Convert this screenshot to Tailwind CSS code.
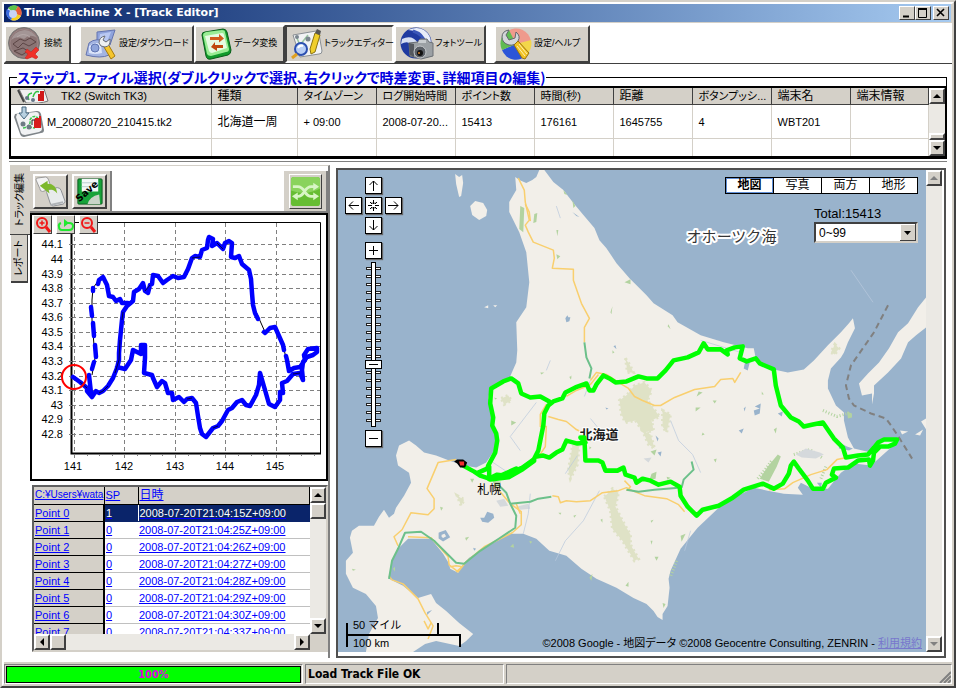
<!DOCTYPE html>
<html lang="ja">
<head>
  <meta charset="UTF-8" />
  <meta name="viewport" content="width=device-width, initial-scale=1.0" />
  <title>Time Machine X - [Track Editor]</title>
  <script src="https://cdn.jsdelivr.net/npm/@tailwindcss/browser@4"></script>
</head>
<body class="bg-[#d4d0c8] text-black font-['Liberation_Sans','Noto_Sans_CJK_JP',sans-serif]">

<div class="flex flex-col min-h-screen border-2 border-t-[#d4d0c8] border-l-[#d4d0c8] border-r-[#404040] border-b-[#404040]">
<div class="flex flex-col flex-1 border-2 border-t-white border-l-white border-r-[#d4d0c8] border-b-[#d4d0c8]">

  <!-- title bar -->
  <header class="flex items-center h-[18px] pl-[2px] pr-[2px] gap-[2px] mr-px bg-linear-to-r from-[#0a246a] to-[#a6caf0]">
    <svg class="w-4 h-4" viewBox="0 0 16 16">
      <circle cx="8" cy="8" r="7.5" fill="#dfe6f5"/>
      <path d="M8 8L2 3A8 8 0 0 1 12 1.500Z" fill="#5cc24a"/>
      <path d="M8 8L12 1A8 8 0 0 1 15 11Z" fill="#e8603c"/>
      <path d="M8 8L15 11A8 8 0 0 1 5 15Z" fill="#f5d020"/>
      <path d="M8 8L5 15A8 8 0 0 1 1 4Z" fill="#3a6ae0"/>
      <circle cx="7" cy="9" r="4" fill="#c8d4f6"/>
    </svg>
    <h1 class="flex-1 text-[11px] leading-4 font-bold text-white font-['DejaVu_Sans',sans-serif]">Time Machine X - [Track Editor]</h1>
    <div class="flex">
      <button aria-label="Minimize" class="w-4 h-[14px] bg-[#d4d0c8] border border-t-white border-l-white border-r-[#404040] border-b-[#404040]"><svg class="w-full h-full" viewBox="0 0 14 12"><path d="M3 9.500h6" stroke="#000" stroke-width="2"/></svg></button>
      <button aria-label="Maximize" class="w-4 h-[14px] bg-[#d4d0c8] border border-t-white border-l-white border-r-[#404040] border-b-[#404040]"><svg class="w-full h-full" viewBox="0 0 14 12"><path d="M2.500 2v8.500h8V2M2 2h9" fill="none" stroke="#000" stroke-width="1"/><path d="M2 2h9" stroke="#000" stroke-width="2"/></svg></button>
      <button aria-label="Close" class="w-4 h-[14px] ml-[2px] bg-[#d4d0c8] border border-t-white border-l-white border-r-[#404040] border-b-[#404040]"><svg class="w-full h-full" viewBox="0 0 14 12"><path d="M3 2l7 7M10 2l-7 7" stroke="#000" stroke-width="1.600"/></svg></button>
    </div>
  </header>

  <main class="flex flex-col flex-1 bg-white border-t border-[#d4d0c8]">

    <!-- main toolbar -->
    <nav class="flex h-[41px] pt-[2px] border-b border-[#404040] text-[9px] whitespace-nowrap [font-feature-settings:'palt']">
      <button class="flex items-center w-[67px] h-[38px] mr-2 pl-[2px] gap-[2px] bg-[#d4d0c8] border-2 border-t-white border-l-white border-r-[#404040] border-b-[#404040]">
        <svg class="w-[34px] h-[34px] shrink-0" viewBox="0 0 34 34">
          <circle cx="16" cy="16" r="15.500" fill="#8a7474" stroke="#777"/>
          <path d="M3 13A14 14 0 0 1 29 11Q22 6 16 12 9 8 3 13Z" fill="#a39595"/>
          <path d="M5 17l7-5 5 2 5-3 6 4-7 4-6-3-5 5zM6 24l9-3 5 3-6 4z" fill="none" stroke="#5c4646"/>
          <path d="M9 10q6-5 13 0" fill="none" stroke="#b5a8a8"/>
          <circle cx="16" cy="16" r="14" fill="none" stroke="#9c8686" stroke-width="1"/>
          <path d="M19 22l4 3 5-5 3 3-4 4 3 3-2 2-4-2-5 2-2-1 3-4-3-2z" fill="#f03028" stroke="#c02020" stroke-width="0.500"/>
        </svg>接続
      </button>
      <button class="flex items-center w-[115px] h-[38px] pl-1 gap-[2px] bg-[#d4d0c8] border-2 border-t-white border-l-white border-r-[#404040] border-b-[#404040]">
        <svg class="w-[32px] h-[32px] shrink-0" viewBox="0 0 32 32">
          <path d="M12 4l18-2-5 15-13-2z" fill="#8fa3dc" stroke="#6474b0"/>
          <path d="M15 6l11-2-4 10-8-1z" fill="#b9c8f2"/>
          <path d="M4 15q7-6 18-1l2 13q-8 4-23 0z" fill="#a3b4e2" stroke="#6474b0"/>
          <path d="M4 18q6-5 12-2l1 9q-7 2-13 0z" fill="#dbe4fa"/>
          <circle cx="10" cy="20" r="4" fill="#8fa4da" stroke="#5f74b2"/>
          <path d="M19 19l4-3 7 12-4 3z" fill="#f5c52c" stroke="#a47a10"/>
          <path d="M14 15q0-6 6-7l-2 4 3 2 4-3q1 7-5 8-5 0-6-4z" fill="#eef0f2" stroke="#6b6f78"/>
        </svg>設定/ダウンロード
      </button>
      <button class="flex items-center w-[91px] h-[38px] pl-1 gap-[2px] bg-[#d4d0c8] border-2 border-t-white border-l-white border-r-[#404040] border-b-[#404040]">
        <svg class="w-[32px] h-[32px] shrink-0" viewBox="0 0 32 32">
          <path d="M2 7q0-3 3-3l18-3q3 0 4 3l4 18q0 4-3 5L11 31q-4 1-5-3z" fill="#129a2c" stroke="#0a5c1a"/>
          <path d="M3 7q0-2 3-3l16-2q3 0 3 2l4 17q0 3-3 3l-15 4q-3 0-4-2z" fill="#9aec94"/>
          <path d="M5 8l17-3q2 0 2 2l3 13-15 5q-2 0-3-2z" fill="#e6fbe2"/>
          <path d="M10 9h9V6l5 4.500-5 4V12h-9z" fill="#d25c1c"/>
          <path d="M23 17h-8v-3l-4 5 6 4v-3h6z" fill="#c0480e"/>
        </svg>データ変換
      </button>
      <button class="flex items-center w-[109px] h-[38px] pl-1 gap-px bg-[#d4d0c8] border-2 border-t-[#404040] border-l-[#404040] border-r-white border-b-white">
        <svg class="w-[32px] h-[32px] shrink-0" viewBox="0 0 32 32">
          <path d="M2 7l23-4q2 0 3 3l3 17q0 3-3 3L9 29z" fill="#f2f3f4" stroke="#8a8f94"/>
          <path d="M5 8l4 9 8-10" fill="none" stroke="#9ac6a0" stroke-width="1.500"/>
          <circle cx="6" cy="9" r="2" fill="#7c8790"/><circle cx="17" cy="11" r="2.500" fill="#7c8790"/>
          <path d="M24 5l5 2-5 17-4 2-1-5z" fill="#f0cf2c" stroke="#8a7310"/>
          <path d="M24 5l2-4 4 2-1 4z" fill="#555"/>
          <circle cx="10" cy="21" r="6" fill="#b8cef5" stroke="#2b4fb0" stroke-width="2"/>
          <path d="M7 20a4 4 0 0 1 5-2" stroke="#fff" fill="none" stroke-width="2"/>
          <path d="M6 26l-5 4" stroke="#e0a020" stroke-width="3"/>
        </svg>トラックエディター
      </button>
      <button class="flex items-center w-[92px] h-[38px] mr-2 pl-1 gap-px bg-[#d4d0c8] border-2 border-t-white border-l-white border-r-[#404040] border-b-[#404040]">
        <svg class="w-[34px] h-[34px] shrink-0" viewBox="0 0 34 34">
          <circle cx="16" cy="16" r="15.500" fill="#1f3aa0"/>
          <path d="M8 3q12 0 17 12l6 1q0-8-7-13-7-4-16 0z" fill="#e8edf8"/>
          <path d="M2 12q10-5 16 4l-6 2Q8 13 1 17z" fill="#d5def2"/>
          <path d="M13 4q10 3 12 12" fill="none" stroke="#3a56b8" stroke-width="3"/>
          <path d="M9 16l9-1 2-3h7l2 3 4 1v13l-12 3-11-3z" fill="#9ba0a4" stroke="#6a6f74"/>
          <path d="M9 16l5 1v13l-4-2z" fill="#54585e"/>
          <path d="M19 13h7v3h-8z" fill="#c8cccf"/>
          <circle cx="20" cy="25" r="6" fill="#5a5f66" stroke="#c6c9cc"/>
          <circle cx="20" cy="26" r="3" fill="#111"/><circle cx="19" cy="26" r="1" fill="#d08030"/>
        </svg>フォトツール
      </button>
      <button class="flex items-center w-[96px] h-[38px] pl-1 gap-[2px] bg-[#d4d0c8] border-2 border-t-white border-l-white border-r-[#404040] border-b-[#404040]">
        <svg class="w-[32px] h-[32px] shrink-0" viewBox="0 0 32 32">
          <path d="M16 16L8 3A15 15 0 0 1 31 13Z" fill="#ef9a8c"/>
          <path d="M16 16L31 12A15 15 0 0 1 25 28Z" fill="#f3d64a"/>
          <path d="M16 16L27 27A15 15 0 0 1 2 22Z" fill="#2c55d8"/>
          <path d="M16 16L2 22A15 15 0 0 1 9 2Z" fill="#5fbb52"/>
          <path d="M2 9q0-6 7-7l-3 5 3 5 6-2 1-6q5 4 2 9-3 5-9 4-7-2-7-8z" fill="#d3d6d9" stroke="#63686e"/>
          <path d="M14 17l4-4 11 12-4 6-3-1z" fill="#f2c326" stroke="#9a7410"/>
          <path d="M17 18l8 10M19 16l8 10" stroke="#fff2b0"/>
        </svg>設定/ヘルプ
      </button>
    </nav>

    <!-- file list -->
    <fieldset class="mt-1 mx-[5px] border border-black min-w-0">
      <legend class="ml-[7px] text-[14px] leading-[18px] font-bold text-[#0000e0] font-['Noto_Sans_CJK_JP',sans-serif] whitespace-nowrap [font-feature-settings:'palt']">ステップ1. ファイル選択(ダブルクリックで選択、右クリックで時差変更、詳細項目の編集)</legend>
      <div class="flex h-[72px] border-t-2 border-l border-b-2 border-r border-black overflow-hidden">
        <table class="flex-1 table-fixed border-collapse w-full text-[11px] leading-4">
          <colgroup>
            <col class="w-[200px]" /><col class="w-[86px]" /><col class="w-[79px]" /><col class="w-[79px]" /><col class="w-[79px]" />
            <col class="w-[79px]" /><col class="w-[79px]" /><col class="w-[79px]" /><col class="w-[79px]" /><col />
          </colgroup>
          <thead>
            <tr class="h-4 bg-[#d4d0c8] text-left whitespace-nowrap *:font-normal *:border-r *:border-b *:border-[#404040] *:overflow-hidden *:[font-feature-settings:'palt']">
              <th class="pl-[6px]">
                <span class="flex items-center h-[14px] gap-3">
                  <svg class="w-8 h-[14px]" viewBox="0 0 32 14"><path d="M2 0h25l4 12q-8 3-22 2z" fill="#f0f0f0" stroke="#777"/><path d="M1 1l6 12" stroke="#444" stroke-width="2"/><path d="M12 11q-3-6 3-7M16 8q2-7 6-5" fill="none" stroke="#30c040" stroke-width="1.500"/><circle cx="10" cy="9" r="2" fill="#678"/><circle cx="16" cy="11" r="2" fill="#678"/><path d="M21 5h2V2h4v10h-6z" fill="#d01818"/></svg>
                  TK2 (Switch TK3)
                </span>
              </th>
              <th class="pl-[6px] text-[12px]">種類</th>
              <th class="pl-[6px]">タイムゾーン</th>
              <th class="pl-[6px]">ログ開始時間</th>
              <th class="pl-[6px]">ポイント数</th>
              <th class="pl-[6px]">時間(秒)</th>
              <th class="pl-[6px] text-[12px]">距離</th>
              <th class="pl-[6px]">ボタンプッシ...</th>
              <th class="pl-[6px] text-[12px]">端末名</th>
              <th class="pl-[6px] text-[12px]">端末情報</th>
            </tr>
          </thead>
          <tbody class="whitespace-nowrap *:*:border-r *:*:border-b *:*:border-[#d4d0c8]">
            <tr class="h-[34px]">
              <td class="pl-[2px]">
                <span class="flex items-center gap-[2px]">
                  <svg class="w-8 h-8 -my-px" viewBox="0 0 32 32"><path d="M2 8l22-3q3 0 4 3l3 16q0 3-3 3L11 31q-3 0-4-3L1 11z" fill="#7e8488"/><path d="M4 8l19-2q3 0 3 3l3 14q0 2-3 3l-14 3q-3 0-4-2L3 11z" fill="#f1f2f3"/><path d="M9 1h4v6h3l-5 6-5-6h3z" fill="#b8d0e0" stroke="#486880"/><path d="M10 22q8-1 7-8 3-6 8-2M16 21l6 1" fill="none" stroke="#3cc850" stroke-width="1.500" stroke-dasharray="3 1"/><circle cx="10" cy="18" r="2.500" fill="#6d7a84"/><circle cx="16" cy="21" r="2.500" fill="#6d7a84"/><path d="M22 12h4v-2h2v12h-7v-7z" fill="#d81c1c"/><path d="M22 14h-3v5" stroke="#222" fill="none"/></svg>
                  M_20080720_210415.tk2
                </span>
              </td>
              <td class="pl-[6px] text-[12px]">北海道一周</td>
              <td class="pl-[6px]">+ 09:00</td>
              <td class="pl-[6px]">2008-07-20...</td>
              <td class="pl-[6px]">15413</td>
              <td class="pl-[6px]">176161</td>
              <td class="pl-[6px]">1645755</td>
              <td class="pl-[6px]">4</td>
              <td class="pl-[6px]">WBT201</td>
              <td></td>
            </tr>
            <tr class="h-[18px]"><td></td><td></td><td></td><td></td><td></td><td></td><td></td><td></td><td></td><td></td></tr>
          </tbody>
        </table>
        <div class="flex flex-col w-4 bg-[#ebe9e4]">
          <button aria-label="Scroll up" class="h-4 bg-[#d4d0c8] border-2 border-t-white border-l-white border-r-[#404040] border-b-[#404040]"><svg class="w-full h-full" viewBox="0 0 12 12"><path d="M2 8l4-4 4 4z"/></svg></button>
          <div class="flex-1"></div>
          <div class="h-[7px] bg-[#d4d0c8] border-2 border-t-white border-l-white border-r-[#404040] border-b-[#404040]"></div>
          <button aria-label="Scroll down" class="h-4 bg-[#d4d0c8] border-2 border-t-white border-l-white border-r-[#404040] border-b-[#404040]"><svg class="w-full h-full" viewBox="0 0 12 12"><path d="M2 4l4 4 4-4z"/></svg></button>
        </div>
      </div>
    </fieldset>

    <div class="flex flex-1 mt-[2px] ml-[5px] mr-[5px] mb-1 border-t border-[#808080]">

      <!-- side tabs -->
      <div class="flex flex-col items-end w-[21px] pt-[3px] text-[10px] leading-4 whitespace-nowrap [font-feature-settings:'palt']">
        <button class="flex items-center justify-center w-5 h-[70px] bg-[#d4d0c8] border-b border-[#404040]"><span class="[writing-mode:vertical-rl] [text-orientation:sideways] rotate-180">トラック編集</span></button>
        <button class="flex items-center justify-center w-[17px] h-[48px] mr-[2px] bg-[#d4d0c8] border-b-2 border-r border-[#404040]"><span class="[writing-mode:vertical-rl] [text-orientation:sideways] rotate-180">レポート</span></button>
      </div>

      <!-- left column -->
      <div class="flex flex-col w-[300px] shrink-0 mt-[3px] border-t border-r-2 border-[#808080] border-t-[#d4d0c8]">
        <div class="flex justify-between h-[47px] pt-[5px] bg-white border-b-2 border-[#808080]">
          <div class="flex h-[40px] p-[3px] gap-1 bg-[#d4d0c8] border-r-2 border-[#808080]">
            <button aria-label="Merge tracks" class="w-[35px] h-[35px] bg-[#d4d0c8] border-2 border-t-white border-l-white border-r-[#404040] border-b-[#404040]"><svg class="w-full h-full" viewBox="0 0 32 32"><path d="M1 4q0-2 2-2l8-1q2 0 3 3l3 9-9 3q-3 0-3-3z" fill="#f3f3f3" stroke="#999"/><path d="M12 17q0-2 2-3l9-2q3 0 4 3l4 11q0 2-2 3l-10 2q-2 0-3-2z" fill="#e8ebec" stroke="#8c9094"/><path d="M16 30l13-3" stroke="#b0b4b8" stroke-width="2"/><path d="M5 10l8-5v3q9 0 10 10-4-5-9-4l1 4z" fill="#7db82c"/></svg></button>
            <button aria-label="Save" class="w-[35px] h-[35px] bg-[#d4d0c8] border-2 border-t-white border-l-white border-r-[#404040] border-b-[#404040]"><svg class="w-full h-full" viewBox="0 0 32 32"><rect x="4" y="3" width="25" height="26" rx="1" fill="#17a33a" stroke="#0b5c20"/><path d="M8 3h17v13H8z" fill="#f3f8f8"/><path d="M8 7h17M8 11h17" stroke="#b8cccc"/><path d="M14 29q2-8 12-10l1 10z" fill="#c9d3c8"/><text x="5" y="26" transform="rotate(-42 7 26)" font-size="10" font-weight="bold" font-family="DejaVu Sans">Save</text></svg></button>
          </div>
          <div class="flex h-[40px] w-[44px] p-[3px] justify-center bg-[#d4d0c8] border-r-2 border-[#808080]">
            <button aria-label="Shuffle" class="w-[33px] h-[35px] bg-[#d4d0c8] border border-t-white border-l-white border-r-[#404040] border-b-[#404040]"><svg class="w-full h-full" viewBox="0 0 32 32"><rect x="1" y="1" width="30" height="30" rx="3" fill="#66bd32"/><path d="M1 4q0-3 3-3h24q3 0 3 3v9q-15 8-30 2z" fill="#8ad35c"/><path d="M3 11h5q4 0 7 5t7 5h3M7 21h1q4 0 7-5t7-5h6" fill="none" stroke="#d8f5c4" stroke-width="3"/><path d="M24 7l6 4-6 4zM24 17l6 4-6 4zM8 17l-6 4 6 4z" fill="#d8f5c4"/></svg></button>
          </div>
        </div>

        <!-- longitude / latitude chart -->
        <div class="relative border-2 border-black bg-white">
          <svg class="block w-full" viewBox="32 215 294 264" font-family="Liberation Sans">
            <g stroke="#808080" stroke-dasharray="4 3" shape-rendering="crispEdges">
              <path d="M72 244.500H320M72 259.500H320M72 274.500H320M72 288.500H320M72 303.500H320M72 317.500H320M72 332.500H320M72 346.500H320M72 361.500H320M72 376.500H320M72 390.500H320M72 405.500H320M72 419.500H320M72 434.500H320"/>
              <path d="M74.500 223V453M124.500 223V453M175.500 223V453M225.500 223V453M276.500 223V453"/>
            </g>
            <path d="M71.500 222.500H320.500V453" fill="none" stroke="#000"/>
            <path d="M71.500 222V453.500H321" fill="none" stroke="#000" stroke-width="2"/>
            <path d="M69 244.500h3M69 259.500h3M69 274.500h3M69 288.500h3M69 303.500h3M69 317.500h3M69 332.500h3M69 346.500h3M69 361.500h3M69 376.500h3M69 390.500h3M69 405.500h3M69 419.500h3M69 434.500h3M74.500 454v4M87.500 454v2M99.500 454v2M112.500 454v2M124.500 454v4M137.500 454v2M150.500 454v2M162.500 454v2M175.500 454v4M188.500 454v2M200.500 454v2M213.500 454v2M225.500 454v4M238.500 454v2M251.500 454v2M263.500 454v2M276.500 454v4M289.500 454v2M301.500 454v2M314.500 454v2" stroke="#808080"/>
            <g id="latLabels" font-size="11" text-anchor="end"></g>
            <g id="lonLabels" font-size="11" text-anchor="middle"></g>
            <path d="M92 375L95 358 92 320 92 300 93 288 99 280M250 270L253 305 265 332M283 345L289 371" fill="none" stroke="#000"/>
            <g fill="none" stroke="#0000ff" stroke-width="4.500" stroke-linejoin="round" stroke-linecap="round">
              <path d="M73 377L80 382 87 388 87 391 92 397 96 391 99 393 103 391 108 386 113 378 115 373 117 368 119 360 119 353 120 340 121 330 122 320 123 312 127 306 133 301 134 292 139 289 143 283 145 291 148 293 150 285 152 284 153 275 158 276 163 283 167 280 173 276 178 278 184 277 188 269 192 258 195 256 200 257 202 250 207 248 208 240 209 237 213 239 212 246 217 243 223 249 225 243 229 241 232 243 231 257 235 258 239 256 242 264 249 270 251 279 252 293 253 305 255 313 258 319M264 332L265 333 270 328 275 327 279 336 283 345 284 350M286 356L287 360 289 371 294 368 300 367 305 360 304 355 308 349 317 348 317 352 313 355 307 357 303 362 302 370 303 380 300 373 293 374 287 381 282 383 283 393 280 392 280 400 275 407 269 404 265 390 260 373 259 385 256 395 250 406 246 405 242 400 237 402 232 408 228 410 222 421 218 426 213 428 206 437 202 434 200 428 198 416 196 403 192 398 187 399 184 402 179 397 173 400 172 393 168 393 165 383 162 381 157 387 153 378 152 375 144 373 145 358 145 345 141 345 141 354 133 350 131 360 125 369 117 367"/>
              <path d="M91 393L89 375M92 369L94 362M96 357L95 345M94 336L93 323M92 316L91 307M93 291V288M98 284L99 280 103 277 107 285 109 296 113 297 116 301 120 299 122 303 128 303"/>
            </g>
            <path d="M80 382L87 388M99 393L103 391 108 386M115 373L119 360 120 340M122 320L123 312M145 291L150 285M192 258L200 257M217 243L223 249M293 374L300 373M192 398L187 399M213 428L218 426" fill="none" stroke="#000" stroke-width="0.700"/>
            <circle cx="74" cy="377" r="12" fill="none" stroke="#f00" stroke-width="2"/>
          </svg>
          <div class="absolute top-0 left-px flex gap-1">
            <button aria-label="Zoom in" class="w-[19px] h-[19px] bg-[#d4d0c8] border border-t-white border-l-white border-r-[#404040] border-b-[#404040]"><svg class="w-full h-full" viewBox="0 0 17 17"><circle cx="8" cy="7" r="5" fill="none" stroke="#f01818" stroke-width="2"/><path d="M5.500 7h5M8 4.500v5" stroke="#f01818" stroke-width="1.500"/><path d="M12 11l4 5" stroke="#f01818" stroke-width="3"/></svg></button>
            <button aria-label="Reset zoom" class="w-[19px] h-[19px] bg-[#d4d0c8] border border-t-white border-l-white border-r-[#404040] border-b-[#404040]"><svg class="w-full h-full" viewBox="0 0 17 17"><path d="M4 7Q1 8 2 11q0 3 3 3h7q4 0 4-4 0-3-4-3H7" fill="none" stroke="#20e830" stroke-width="2"/><path d="M7 3v8l5-4z" fill="#20e830"/></svg></button>
            <button aria-label="Zoom out" class="w-[19px] h-[19px] bg-[#d4d0c8] border border-t-white border-l-white border-r-[#404040] border-b-[#404040]"><svg class="w-full h-full" viewBox="0 0 17 17"><circle cx="7" cy="7" r="5" fill="none" stroke="#f01818" stroke-width="2"/><path d="M4.500 7h5" stroke="#f01818" stroke-width="1.500"/><path d="M11 11l4 5" stroke="#f01818" stroke-width="3"/></svg></button>
          </div>
        </div>

        <!-- point grid -->
        <div class="mt-1 ml-[2px] border-2 border-[#606060] border-r-[#d4d0c8] border-b-[#d4d0c8]">
          <div class="flex h-[147px]">
            <div class="flex-1 h-full overflow-hidden">
              <table class="w-full table-fixed border-collapse text-[11px] leading-4 text-[#0000ff] whitespace-nowrap">
                <colgroup><col class="w-[70px]" /><col class="w-[34px]" /><col /></colgroup>
                <thead>
                  <tr class="h-[17px] bg-[#d4d0c8] text-left underline *:font-normal *:p-0 *:pl-px *:border-b *:border-r *:border-black *:overflow-hidden">
                    <th class="text-[10px]"><a href="#">C:¥Users¥wata</a></th><th><a href="#">SP</a></th><th class="text-[12px]"><a href="#">日時</a></th>
                  </tr>
                </thead>
                <tbody id="points" class="underline"></tbody>
              </table>
            </div>
            <div class="flex flex-col w-4 bg-[#ebe9e4]">
              <button aria-label="Scroll up" class="h-4 bg-[#d4d0c8] border-2 border-t-white border-l-white border-r-[#404040] border-b-[#404040]"><svg class="w-full h-full" viewBox="0 0 12 12"><path d="M2 8l4-4 4 4z"/></svg></button>
              <div class="h-4 bg-[#d4d0c8] border-2 border-t-white border-l-white border-r-[#404040] border-b-[#404040]"></div>
              <div class="flex-1"></div>
              <button aria-label="Scroll down" class="h-4 bg-[#d4d0c8] border-2 border-t-white border-l-white border-r-[#404040] border-b-[#404040]"><svg class="w-full h-full" viewBox="0 0 12 12"><path d="M2 4l4 4 4-4z"/></svg></button>
            </div>
          </div>
          <div class="flex h-4 pr-4 bg-[#d4d0c8]">
            <button aria-label="Scroll left" class="w-4 bg-[#d4d0c8] border-2 border-t-white border-l-white border-r-[#404040] border-b-[#404040]"><svg class="w-full h-full" viewBox="0 0 12 12"><path d="M8 2l-4 4 4 4z"/></svg></button>
            <div class="w-4 bg-[#d4d0c8] border-2 border-t-white border-l-white border-r-[#404040] border-b-[#404040]"></div>
            <div class="flex-1 bg-[#ebe9e4]"></div>
            <button aria-label="Scroll right" class="w-4 bg-[#d4d0c8] border-2 border-t-white border-l-white border-r-[#404040] border-b-[#404040]"><svg class="w-full h-full" viewBox="0 0 12 12"><path d="M4 2l4 4-4 4z"/></svg></button>
          </div>
        </div>
      </div>

      <!-- map panel -->
      <section class="flex flex-1 mt-[6px] ml-[6px] mr-px border-2 border-[#505050] bg-white pb-1 pr-[2px]">
        <div class="relative flex-1 overflow-hidden bg-[#99b3cc]">
          <svg class="absolute inset-0 w-full h-full" viewBox="338 170 587 481" preserveAspectRatio="xMidYMid slice" font-family="Noto Sans CJK JP, sans-serif">
            <rect x="338" y="170" width="587" height="481" fill="#99b3cc"/>
            <g fill="#f2efe9">
              <path d="M536 177L539 170H544L547 174 553 182 563 190 573 203 583 215 594 228 599 240 606 248 616 263 629 278 646 295 653 303 672 315 677 322 700 335 723 342 747 348 753 348 755 358 773 369 787 372 803 369 813 360 827 345 840 332 848 323 852 318 854 328 847 342 843 352 840 357 830 368 827 380 827 388 835 405 843 412 843 420 847 437 853 448 870 452 880 440 897 440 890 447 870 465 853 463 840 472 827 488 812 488 800 482 797 487 802 494 783 493 767 490 753 487 737 495 717 508 697 527 680 548 670 570 668 578 669 587 667 605 662 613 662 619 657 616 653 610 646 603 633 597 616 587 596 578 581 568 566 555 549 550 536 538 523 533 509 533 483 548 469 557 463 563 458 572 450 568 449 563 443 553 431 538 408 538 398 548 391 563 389 578 403 585 418 597 431 593 436 602 446 610 459 622 473 633 466 640 459 645 436 640 425 643 413 651H366L369 633 378 617 376 605 366 593 353 587 346 573 346 560 353 552 350 537 352 530 359 525 374 525 379 516 384 509 389 517 394 513 396 507 404 495 411 482 409 472 398 465 396 455 399 445 409 440 416 445 424 452 436 455 449 460 463 465 476 467 486 462 494 450 496 437 491 420 493 410 488 398 490 388 509 378 516 362 517 350 516 322 526 307 529 282 526 252 519 232 509 212 509 202 516 190 515 177 519 180 526 183 532 180Z"/>
              <path d="M455 174l4 3 3-2 1 8-2 13-2 1-3-13z"/>
              <path d="M470 206l5-5 8 2 4 7-1 6-7 4-7-5z"/>
              <path d="M484 307l4-2v3zM493 305l4 0-2 2z"/>
              <path d="M925 297L917 307 907 323 897 332 888 348 878 362 867 373 858 383 861 395 871 393 871 404 873 393 873 385 887 372 900 358 907 342 915 335 925 327Z"/>
              <path d="M925 418l-5 3 5 8zM899 430l8 1-6 3zM914 434l8-5-3 6z"/>
            </g>
            <!-- hills and woods -->
            <g fill="#dfe2c6" stroke="#dfe2c6" stroke-width="3" stroke-dasharray="2 3">
              <path d="M619 400l8-6 7-9 10-3 7 8-4 10 6 8 6 8-8 4 2 10-10 2-8-12-10 2-4-8z"/>
              <path d="M604 496l8-8 6 4-3 14 7 14 8 14 0 10 8 14-4 2-12-20-10-12-2-18z"/>
              <path d="M572 446l7-4-2 22-7 14-2-8zM625 358l4 6 4 8-6 0zM642 430l8 4 4 14-6-4z"/>
              <path d="M662 410l8 4-4 18-4-6zM834 344l4 4-4 6-4-2zM501 398l7-3 3 5-7 4zM457 495l7 4-3 6z"/>
            </g>
            <g fill="#b3d3a0">
              <path d="M520 206l4 2-1 24-4-3zM534 214l3-1-1 9-3 1zM556 230l2 0-1 6zM556 254l4 2-3 3zM563 190l4 5-3-1zM572 200l3 6-2 2z"/>
              <path d="M767 466l10-12 3 2-4 10-8 15-9-3zM651 473l5-2-1 7-6 1zM650 451l6-2-2 6zM695 407l5 0-5 4zM698 391l4 1-6 4zM773 429l3-2-1 6zM624 282l6-3v5zM610 312l2-6-1 8zM668 324l2 5-3-3zM492 480l9 1-5 6zM589 577l3-4-1 7zM625 585l3-4v5zM470 478l4 0-2 4zM680 535l5-2-4 8zM662 602l3 1-2 4zM846 411l5 2 0 4-4 1z"/>
              <path d="M494 397l3 1-2 1zM511 420l5 2-5 3zM540 372l4 0-3 2zM569 377l2-2 0 3zM440 506l3 1-2 3zM465 537l4-1-3 4zM510 546l3-3 1 4zM352 568l4 1-3 1zM393 568l2-2 0 5zM589 446l2 1-2 2zM712 400l4 0-2 3zM702 432l2 2-3 1zM666 476l4 1-3 2zM713 459l3-1-1 4zM761 391l2 3-2 0zM650 520l3-1-2 3zM654 556l4 0-2 4zM650 540l2 0-1 4zM529 540l3 1-2 2zM558 512l3 0-1 2zM573 515l3-1-2 3zM600 519l2-1 0 4zM612 350l2 2-2 1zM569 376l2 1-1 2z"/>
            </g>
            <path d="M757 478l8-10 6-8M820 478l5-12M793 454l16-5 12 8M822 410l14 6 14-4M676 560l-6 16" fill="none" stroke="#b3d3a0" stroke-width="3" stroke-dasharray="1 2"/>
            <g fill="#99b3cc">
              <path d="M565 318l2-3 1 2 2 0-1 4-3 1zM572 212l7 5-3-1zM754 406l6-3-1 10-5 2-1-5 6-2zM777 413l5-2-1 5zM480 517l4 0 3-6 6 2 1 4-6 5-6-1z"/>
              <path d="M738 430l5-2-2 5zM655 435l3 3-1 3zM427 611l5-2-5 5zM657 452l4-1-1 5zM816 482l5 0-1 5zM613 346l2-1 1 4zM745 358l4 4-2 8-4-2zM743 408l2-2-1 5zM838 442l8 4 6 2-4 2-10-2zM473 547l3 1-2 2zM605 407l3 1-2 1z"/>
            </g>
            <path d="M440 533l5-2 3 5-5 3-3-2z" fill="#f2efe9" stroke="#99b3cc" stroke-width="3"/>
            <path d="M795 454l10-6 14 4 4 2-8 4-14-1zM496 500l8-2 4 7-8 1zM516 506l12-3 2 5-10 1zM643 458l8-1-3 5z" fill="#d5d9dc"/>
            <g fill="none" stroke="#b9c9dc" stroke-width="0.700">
              <path d="M700 340l20 6 20 6M577 455l-12 18M555 560l10-20 18-20 16-30M600 430l-10-12M546 370l4-10M690 530l-6 20M850 270l22 32"/>
              <path d="M523 533l5-20 2-20M670 420l8 20 14 14 8 18M556 206l4 12M590 380l-6 16M520 450l-10-14 26-34M490 460l18 12"/>
            </g>
            <!-- roads -->
            <g fill="none" stroke="#f9cf6e" stroke-width="1.500" stroke-linejoin="round">
              <path d="M518 178L524 190 525 202 529 220 525 225 528 232 533 242 543 246 553 250 554 258 552 268 573 269 573 280 581 303 589 318 584 327 584 342"/>
              <path d="M525 204l4 8 1 9M590 380l6-8 10 2 12 8 10 6 6 8 8 4 12 5 6 0 14-8 20-8 20-3 6-7 12-1 2 4 6-10M566 396l10-6 14-6 8-10M564 394l10-8M546 404l-6 10 0 12 6 0-1 20-8 12M548 416l10 3 8 2 10 8 12 6 2 6"/>
              <path d="M456 459L438 462 427 488 434 498 434 508 428 514 411 512 402 529 394 536 398 545M389 575L392 579 403 583 418 598 425 612 433 625 428 638M450 566l6-1 6 1-6 5M408 536L431 537 448 556 449 564 458 571 466 561 484 546 512 532 521 524 521 511 510 503 494 484"/>
              <path d="M552 495l6 1 2 6 6-2 10 1 14-1 12-8 16-2 8-3 8 4 10 4 22 3 12 6 6 7M624 480l6 6-4 4M768 489l16-1 8-6 18-8 16-5 10-10 10-2"/>
              <path d="M424 620l4 8 3-6M520 513l-4-10"/>
            </g>
            <g fill="none" stroke="#6cc08a" stroke-width="2" stroke-linejoin="round">
              <path d="M584 342L586 357 591 368 589 378M389 578L392 560 398 548 405 532 421 531 434 540 448 554 456 562 464 563 480 550 500 537 515 527 516 515 510 503 506 492 498 484M510 503L530 501 538 498 551 496M626 489l12 2 16-2 24-2M681 487l2-8 10-10-2-8"/>
            </g>
            <path d="M887 305L873 332 850 365 845 385 848 398 853 405 870 413 885 418 890 425 898 437 911 458" fill="none" stroke="#808080" stroke-width="2" stroke-dasharray="6 4"/>
            <!-- place names -->
            <text x="686" y="242" font-size="15" fill="#333" stroke="#fff" stroke-width="4" stroke-linejoin="round" paint-order="stroke">オホーツク海</text>
            <text x="579" y="438" font-size="13" font-weight="bold" fill="#222" stroke="#fff" stroke-width="2" paint-order="stroke">北海道</text>
            <text x="477" y="493" font-size="12">札幌</text>
            <!-- track -->
            <g fill="none" stroke="#00ff00" stroke-width="4.500" stroke-linejoin="round" stroke-linecap="round">
              <path d="M463 465L474 471 480 475 489 478 497 474 506 475 514 470 523 467 533 460 538 450 540 440 543 425 544 413 548 405 553 401 562 398 565 392 575 387 586 383 589 390 593 390 596 384 603 375 609 378 615 382 626 381 638 376 646 378 657 378 665 370 673 360 687 357 698 352 703 343 707 349 720 349 727 354 726 350 734 347 742 346 739 358 746 361 755 358 759 363 773 369 775 385 780 405 790 417 798 421 803 426 812 424 822 422 833 438 842 447 845 457 857 455 867 454 873 447 877 442 883 439 896 439 894 443 887 446 879 446 873 452 872 460 869 465 868 459 857 460 847 467 833 468 831 474 835 477 825 482 822 488 812 488 807 480 798 468 793 461 790 465 788 473 782 483 773 488 762 483 743 489 732 497 718 505 702 509 696 515 687 506 680 495 679 486 670 481 658 484 650 480 642 478 636 482 634 477 625 474 623 467 617 470 605 470 602 462 598 460 585 460 584 437 580 437 585 442 577 443 566 440 562 449 556 452 549 457 543 455 536 456"/>
              <path d="M478 472L487 468 488 465 495 452 497 440 496 433 492 425 493 417 490 403 491 388 503 381 511 378 518 383 521 393 530 397 540 396 549 401M489 466l0 12M496 477l20-9"/>
              <path d="M490 478L508 476 522 468 533 460" stroke-width="6"/>
            </g>
            <path d="M454 461l3-2h6l4 3-2 5h-5l-3-4z" fill="#000"/><path d="M459 461h5v4h-4z" fill="#f03030"/>
          </svg>

          <!-- pan and zoom -->
          <div class="absolute top-[7px] left-[7px] flex flex-col items-center gap-2">
            <div class="grid grid-cols-3 gap-[3px] *:w-[17px] *:h-[17px] *:bg-white *:border *:border-black *:shadow-[1px_1px_1px_#666]">
              <button aria-label="North" class="col-start-2"><svg class="w-full h-full" viewBox="0 0 15 15"><path d="M7.500 13V3M3.500 7l4-4 4 4" fill="none" stroke="#000"/></svg></button>
              <button aria-label="West" class="col-start-1"><svg class="w-full h-full" viewBox="0 0 15 15"><path d="M13 7.500H3M7 3.500l-4 4 4 4" fill="none" stroke="#000"/></svg></button>
              <button aria-label="Center"><svg class="w-full h-full" viewBox="0 0 15 15"><path d="M7.500 2v4M7.500 13V9M2 7.500h4M13 7.500H9M4 4l2 2M11 4l-2 2M4 11l2-2M11 11l-2-2M6 4.500l1.500 1.500 1.500-1.500M6 10.500L7.500 9 9 10.500" fill="none" stroke="#000"/></svg></button>
              <button aria-label="East"><svg class="w-full h-full" viewBox="0 0 15 15"><path d="M2 7.500h10M8 3.500l4 4-4 4" fill="none" stroke="#000"/></svg></button>
              <button aria-label="South" class="col-start-2"><svg class="w-full h-full" viewBox="0 0 15 15"><path d="M7.500 2v10M3.500 8l4 4 4-4" fill="none" stroke="#000"/></svg></button>
            </div>
            <div class="flex flex-col items-center">
              <button aria-label="Zoom in" class="w-[17px] h-[17px] bg-white border border-black shadow-[1px_1px_1px_#666]"><svg class="w-full h-full" viewBox="0 0 15 15"><path d="M3 7.500h9M7.500 3v9" stroke="#000"/></svg></button>
              <label class="relative block w-[17px] h-[171px]">
                <svg class="w-full h-full" viewBox="0 0 17 171">
                  <path d="M1 9.500h15M1 17.500h15M1 25.500h15M1 33.500h15M1 41.500h15M1 49.500h15M1 57.500h15M1 65.500h15M1 73.500h15M1 81.500h15M1 89.500h15M1 97.500h15M1 113.500h15M1 121.500h15M1 129.500h15M1 137.500h15M1 145.500h15M1 153.500h15M1 161.500h15" stroke="#222" stroke-width="3"/>
                  <path d="M2 9.500h13M2 17.500h13M2 25.500h13M2 33.500h13M2 41.500h13M2 49.500h13M2 57.500h13M2 65.500h13M2 73.500h13M2 81.500h13M2 89.500h13M2 97.500h13M2 113.500h13M2 121.500h13M2 129.500h13M2 137.500h13M2 145.500h13M2 153.500h13M2 161.500h13" stroke="#fff"/>
                  <rect x="6.500" y="3.500" width="4" height="164" fill="#fff" stroke="#000"/>
                  <rect x="0.500" y="101.500" width="16" height="8" fill="#fff" stroke="#000"/><path d="M4 105.500h9" stroke="#000"/>
                </svg>
                <input type="range" aria-label="Zoom level" min="0" max="19" value="7" class="absolute inset-0 w-full h-full opacity-0 [writing-mode:vertical-lr]" />
              </label>
              <button aria-label="Zoom out" class="w-[17px] h-[17px] bg-white border border-black shadow-[1px_1px_1px_#666]"><svg class="w-full h-full" viewBox="0 0 15 15"><path d="M3 7.500h9" stroke="#000"/></svg></button>
            </div>
          </div>

          <!-- map type and point range -->
          <div class="absolute top-[7px] right-2 flex flex-col items-end">
            <div class="flex border border-black bg-black gap-px text-[12px] leading-[15px] *:w-[47px] *:h-[15px] *:bg-white">
              <button class="font-bold border border-[#6090d8] !leading-[13px]">地図</button><button>写真</button><button>両方</button><button>地形</button>
            </div>
            <div class="w-[104px] mt-3">
              <label for="range" class="block text-[13px] leading-4">Total:15413</label>
              <div class="relative">
                <select id="range" class="appearance-none block w-full h-[21px] pl-[3px] bg-white border-2 border-t-[#404040] border-l-[#404040] border-r-[#d4d0c8] border-b-[#d4d0c8] text-[12px] leading-4"><option>0~99</option></select>
                <svg class="absolute top-[2px] right-[2px] w-4 h-[17px] pointer-events-none" viewBox="0 0 16 17"><rect width="16" height="17" fill="#404040"/><path d="M0 0h15v16H0z" fill="#fff"/><path d="M1 1h14v15H1z" fill="#d4d0c8"/><path d="M4 7h7l-3.500 4z"/></svg>
              </div>
            </div>
          </div>

          <!-- scale -->
          <div class="absolute bottom-0 left-2 w-[116px] text-[11px] leading-[18px]">
            <svg class="absolute bottom-1 left-0 w-[116px] h-[26px]" viewBox="0 0 116 26"><path d="M1 1v24M0 13h115M92 1v12M114 12v13" stroke="#000" stroke-width="2" fill="none"/></svg>
            <p class="pl-[7px]">50 マイル</p>
            <p class="pl-[7px]">100 km</p>
          </div>
          <p class="absolute bottom-[1px] right-1 text-[11px] leading-4 whitespace-nowrap [font-feature-settings:'palt']">©2008 Google - 地図データ ©2008 Geocentre Consulting, ZENRIN - <a href="#" class="text-[#7777cc] underline">利用規約</a></p>
        </div>
        <div class="flex flex-col w-4 bg-[#ebe9e4]">
          <button aria-label="Scroll up" class="h-4 bg-[#d4d0c8] border-2 border-t-white border-l-white border-r-[#404040] border-b-[#404040]"><svg class="w-full h-full" viewBox="0 0 12 12"><path d="M2 8l4-4 4 4z" fill="#808080"/></svg></button>
          <div class="flex-1"></div>
          <button aria-label="Scroll down" class="h-4 bg-[#d4d0c8] border-2 border-t-white border-l-white border-r-[#404040] border-b-[#404040]"><svg class="w-full h-full" viewBox="0 0 12 12"><path d="M2 4l4 4 4-4z" fill="#808080"/></svg></button>
        </div>
      </section>
    </div>
  </main>

  <!-- status bar -->
  <footer class="flex h-[22px] pt-[2px] gap-[2px] bg-[#d4d0c8] text-[12px] leading-[18px] font-bold font-['DejaVu_Sans_Condensed','DejaVu_Sans',sans-serif]">
    <div class="w-[299px] p-px border border-[#808080] border-r-white border-b-white"><div class="h-[17px] border border-black bg-[#00ff00] text-center text-[11px] leading-[15px] text-[#e000e0]">100%</div></div>
    <div class="w-[199px] pl-[2px] border border-[#808080] border-r-white border-b-white">Load Track File OK</div>
    <div class="flex flex-1 items-end justify-end border border-[#808080] border-r-white border-b-white"><svg class="w-3 h-3" viewBox="0 0 12 12"><path d="M1 12L12 1M5 12l7-7M9 12l3-3" stroke="#808080" stroke-width="2"/></svg></div>
  </footer>
</div>
</div>

<script>
  const times = ["04:15", "04:25", "04:26", "04:27", "04:28", "04:29", "04:30", "04:33"];

  document.getElementById("points").innerHTML = times.map((t, i) => `
    <tr class="h-[17px]">
      <td class="p-0 pl-px bg-[#d4d0c8] border-r-2 border-b border-black"><a href="#">Point ${i}</a></td>
      <td class="p-0 pl-px border-b ${i === 0 ? "bg-[#0a246a] text-white border-[#0a246a] border-r border-r-white" : "border-[#c0c0c0]"}">${i === 0 ? 1 : 0}</td>
      <td class="p-0 pl-px border-b ${i === 0 ? "bg-[#0a246a] text-white border-[#0a246a]" : "border-[#c0c0c0]"}">2008-07-20T21:${t}Z+09:00</td>
    </tr>`).join("");

  const lat = [[44.1, 248], [44, 263], [43.9, 278], [43.8, 292], [43.7, 307], [43.6, 321], [43.5, 336], [43.4, 350], [43.3, 365], [43.2, 380], [43.1, 394], [43, 409], [42.9, 423], [42.8, 438]];
  document.getElementById("latLabels").innerHTML = lat.map(([v, y]) => `<text x="63" y="${y}">${v}</text>`).join("");

  const lon = [[141, 73], [142, 124], [143, 175], [144, 225], [145, 275]];
  document.getElementById("lonLabels").innerHTML = lon.map(([v, x]) => `<text x="${x}" y="470">${v}</text>`).join("");
</script>

</body>
</html>
